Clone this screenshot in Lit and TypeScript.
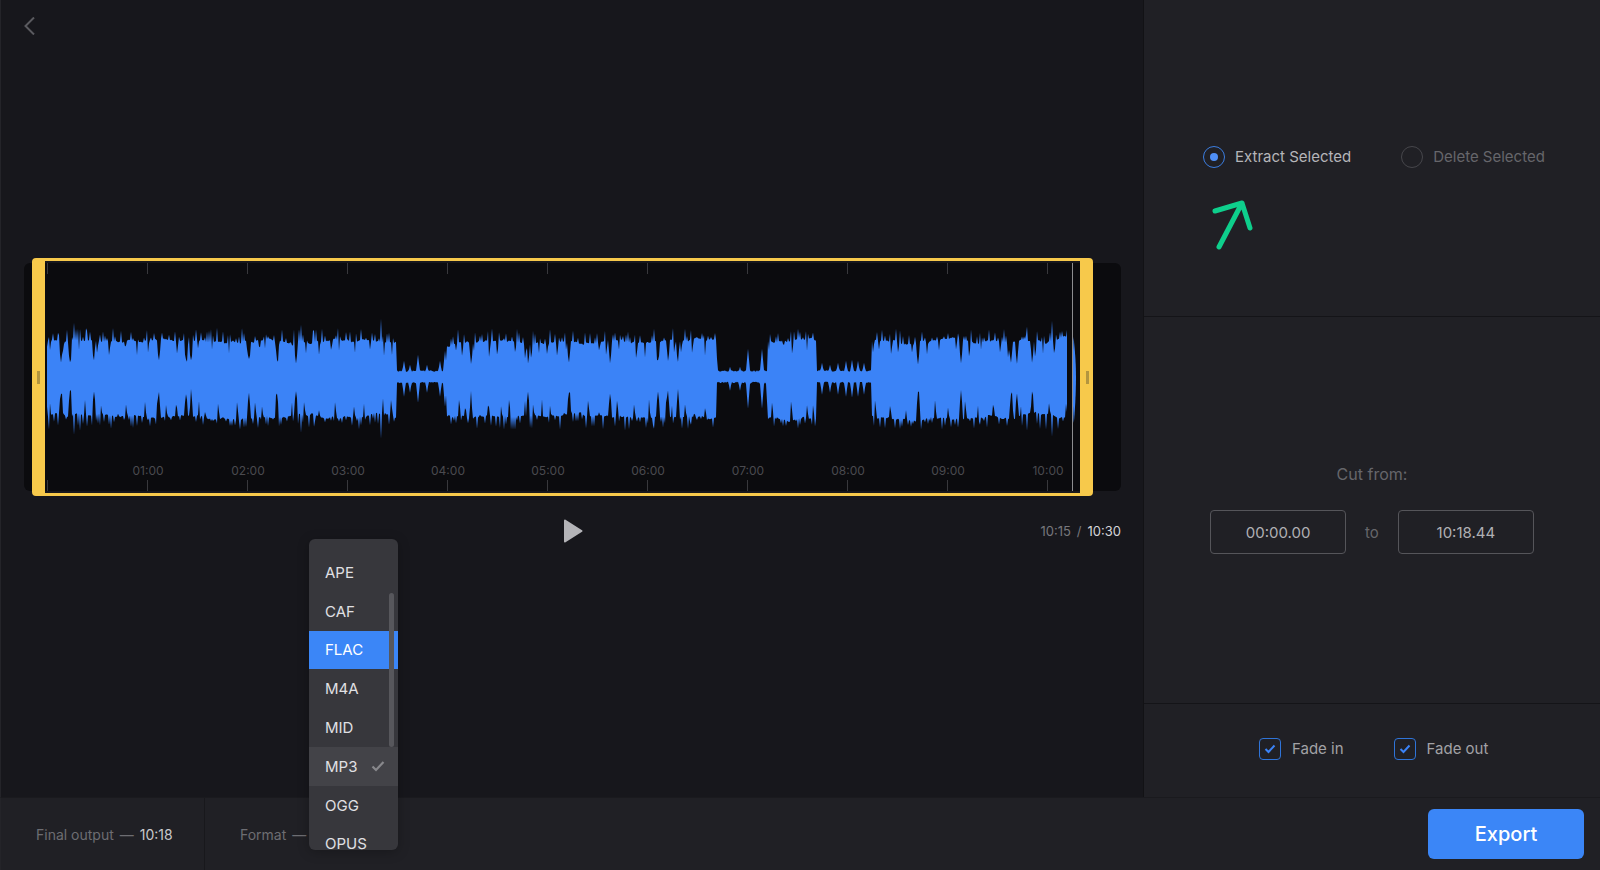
import { LitElement, html, css } from "lit";
import { customElement } from "lit/decorators.js";

// seeded noise so the waveform comes out the same every time
function rng(seed: number) {
  return () => {
    seed = (seed + 0x6d2b79f5) | 0;
    let t = Math.imul(seed ^ (seed >>> 15), 1 | seed);
    t = (t + Math.imul(t ^ (t >>> 7), 61 | t)) ^ t;
    return ((t ^ (t >>> 14)) >>> 0) / 4294967296;
  };
}

// [from, to] in page px
const QUIET = [
  [397, 447],
  [717, 768],
  [817, 872],
];
const NOTCHES = [
  61, 70, 94, 159, 186, 191, 249, 277, 296, 471, 528, 569, 610, 658, 668, 678, 918, 961, 1011, 1017, 1032,
];
const PEAKS: [number, number][] = [
  [48, 36], [58, 44], [74, 54], [80, 50], [87, 46], [301, 52], [314, 46], [375, 42], [381, 58], [389, 44],
  [625, 50], [654, 48], [691, 44], [980, 44], [1027, 50], [1052, 56],
];
const QUIET_PEAKS: [number, number][] = [
  [404, 16], [410, 12], [418, 22], [427, 12], [440, 16], [445, 26], [730, 10], [740, 10], [748, 28], [762, 28],
  [822, 14], [830, 12], [838, 14], [846, 16], [852, 17], [858, 16], [864, 14],
];

function channel(seed: number, bias: number) {
  const r = rng(seed);
  const out: number[] = [];
  for (let x = 47; x <= 1067; x++) out.push(0);
  const add = (cx: number, h: number, w: number) => {
    for (let i = -Math.ceil(w); i <= Math.ceil(w); i++) {
      const k = cx + i - 47;
      if (k < 0 || k >= out.length) continue;
      out[k] = Math.max(out[k], h * (1 - Math.abs(i) / (w + 0.6)));
    }
  };
  const quiet = (x: number) => QUIET.some(([a, b]) => x >= a && x < b);
  // floor
  let drift = 0;
  out.forEach((_, k) => {
    const x = k + 47;
    drift += (r() - 0.5) * 2.2;
    drift *= 0.94;
    out[k] = quiet(x) ? 5 + r() * 1.5 : 36 + bias + drift;
  });
  // hair spikes
  for (let x = 47; x <= 1067; x += 2 + Math.floor(r() * 5)) {
    if (quiet(x)) continue;
    add(x, 38 + bias + r() * 11, 1 + r() * 2);
  }
  PEAKS.forEach(([x, h]) => add(x, h + bias, 1.6));
  QUIET_PEAKS.forEach(([x, h]) => add(x, h + bias, 2));
  // small random dips
  for (let x = 50; x < 1067; x += 6 + Math.floor(r() * 14)) {
    if (quiet(x)) continue;
    const k = x - 47;
    const d = 0.55 + r() * 0.25;
    out[k] *= d;
    if (out[k + 1]) out[k + 1] *= d + 0.2;
  }
  // deep notches
  NOTCHES.forEach((x) => {
    const k = x - 47;
    out[k] = 12 + r() * 6;
    if (out[k - 1]) out[k - 1] *= 0.6;
    if (out[k + 1]) out[k + 1] *= 0.6;
  });
  out[0] = 30;
  return out;
}

function wavePath() {
  const top = channel(11, 0);
  const bottom = channel(29, 4);
  const cy = 113.7;
  let d = `M23 ${cy}`;
  top.forEach((a, k) => (d += `L${k + 23} ${(cy - a).toFixed(1)}`));
  for (let k = bottom.length - 1; k >= 0; k--) d += `L${k + 23} ${(cy + bottom[k]).toFixed(1)}`;
  d += "Z";
  return d;
}

// the small blob right under the playhead
const BLOB = "M1048.6 113.7C1048.6 90 1049.6 74 1049.6 74C1051 88 1052 100 1052 113.7C1052 128 1051 148 1049.8 160C1049 148 1048.6 128 1048.6 113.7Z";

const LABELS = ["", "01:00", "02:00", "03:00", "04:00", "05:00", "06:00", "07:00", "08:00", "09:00", "10:00"];
const FORMATS = ["APE", "CAF", "FLAC", "M4A", "MID", "MP3", "OGG", "OPUS"];

@customElement("app-root")
export class AppRoot extends LitElement {
  static styles = css`
    :host {
      display: block;
      height: 870px;
      font-family: "Inter", "Liberation Sans", sans-serif;
    }
    .app {
      position: relative;
      height: 870px;
      overflow: hidden;
      display: grid;
      grid-template-columns: 1144px 456px;
      grid-template-rows: 797px 73px;
      background: #17171c;
    }
    .main {
      border-left: 1px solid #242429;
      border-right: 1px solid #121215;
      padding: 17px 22px 0 23px;
      display: flex;
      flex-direction: column;
      align-items: flex-start;
    }
    .back {
      display: block;
      margin-bottom: 228px;
    }
    .track {
      position: relative;
      width: 1097px;
      height: 228px;
      border-radius: 6px;
      background: #0b0b0e;
      display: flex;
      flex-direction: column;
      justify-content: space-between;
    }
    .ruler {
      display: flex;
      padding-left: 23px;
    }
    .mark {
      position: relative;
      width: 100px;
      height: 11px;
      flex: none;
      border-left: 1px solid #38383c;
      box-sizing: border-box;
    }
    .mark span {
      position: absolute;
      left: -30px;
      width: 60px;
      bottom: 13px;
      text-align: center;
      font-size: 12px;
      line-height: 14px;
      color: #4a4a4f;
    }
    .wave {
      position: absolute;
      left: 0;
      top: 0;
    }
    .frame {
      position: absolute;
      left: 8px;
      top: -5px;
      width: 1061px;
      height: 238px;
      box-sizing: border-box;
      border: solid #f7c94b;
      border-width: 3px 13px;
      border-radius: 4px;
    }
    .grip {
      position: absolute;
      top: 110px;
      width: 3px;
      height: 13px;
      background: #b3953f;
    }
    .grip.l {
      left: -8px;
    }
    .grip.r {
      right: -9px;
    }
    .playhead {
      position: absolute;
      left: 1048px;
      top: 0;
      width: 1px;
      height: 228px;
      background: #8d8d8f;
    }
    .transport {
      width: 1097px;
      margin-top: 27px;
      height: 26px;
      display: grid;
      grid-template-columns: 1fr auto 1fr;
      align-items: center;
    }
    .play {
      grid-column: 2;
      display: block;
    }
    .time {
      grid-column: 3;
      justify-self: end;
      font-size: 13px;
      color: #77777c;
      display: flex;
      gap: 6px;
    }
    .time b {
      font-weight: 400;
      color: #d4d4d8;
    }
    .side {
      background: #202025;
      display: grid;
      grid-template-rows: 317px 387px 92px;
    }
    .side > section {
      display: flex;
      box-sizing: border-box;
      border-bottom: 1px solid #141418;
    }
    .side > section:last-child {
      border-bottom: 0;
    }
    .modes {
      position: relative;
      padding: 146px 0 0 59px;
      gap: 50px;
      align-items: flex-start;
    }
    .radio {
      display: flex;
      align-items: center;
      gap: 10px;
      font-size: 15px;
      line-height: 22px;
      color: #b5b5b9;
    }
    .radio i {
      width: 22px;
      height: 22px;
      box-sizing: border-box;
      border: 1.5px solid #3b7de0;
      border-radius: 50%;
      display: grid;
      place-items: center;
    }
    .radio i::after {
      content: "";
      width: 8px;
      height: 8px;
      border-radius: 50%;
      background: #4f8ff7;
    }
    .radio.off {
      color: #66666b;
    }
    .radio.off i {
      border-color: #46464b;
    }
    .radio.off i::after {
      display: none;
    }
    .arrow {
      position: absolute;
      left: 68px;
      top: 196px;
    }
    .cut {
      flex-direction: column;
      align-items: center;
      padding-top: 147px;
    }
    .cut h4 {
      margin: 0 0 26px;
      font-size: 16px;
      font-weight: 400;
      line-height: 20px;
      color: #66666b;
    }
    .range {
      display: flex;
      align-items: center;
      gap: 19px;
      font-size: 15px;
      color: #66666b;
    }
    .box {
      width: 136px;
      height: 44px;
      box-sizing: border-box;
      border: 1px solid #55555a;
      border-radius: 4px;
      display: grid;
      place-items: center;
      color: #b0b0b4;
    }
    .fades {
      padding: 34px 0 0 115px;
      gap: 50px;
      align-items: flex-start;
    }
    .check {
      display: flex;
      align-items: center;
      gap: 11px;
      font-size: 15px;
      line-height: 22px;
      color: #a2a2a6;
    }
    .check i {
      width: 22px;
      height: 22px;
      box-sizing: border-box;
      border: 1.5px solid #2f74d8;
      border-radius: 4px;
      display: grid;
      place-items: center;
    }
    .bar {
      grid-column: 1 / 3;
      background: #202025;
      border-top: 1px solid #1a1a1e;
      border-left: 1px solid #242429;
      display: flex;
      align-items: center;
      font-size: 14px;
      color: #6d6d72;
    }
    .cell {
      height: 100%;
      display: flex;
      align-items: center;
      gap: 6px;
      box-sizing: border-box;
      padding-left: 35px;
    }
    .cell:first-child {
      width: 204px;
      border-right: 1px solid #18181c;
    }
    .cell b {
      font-weight: 400;
      color: #c8c8cc;
    }
    .export {
      margin-left: auto;
      margin-right: 16px;
      width: 156px;
      height: 50px;
      border: 0;
      border-radius: 6px;
      background: #3b86f7;
      color: #fff;
      font: 500 20px "Inter", "Liberation Sans", sans-serif;
    }
    .menu {
      position: absolute;
      left: 309px;
      top: 539px;
      width: 89px;
      height: 311px;
      box-sizing: border-box;
      padding-top: 14px;
      overflow: hidden;
      background: #37373c;
      border-radius: 6px;
      box-shadow: 0 2px 12px rgba(0, 0, 0, 0.25);
    }
    .menu div {
      position: relative;
      height: 38.8px;
      box-sizing: border-box;
      padding-left: 16px;
      display: flex;
      align-items: center;
      font-size: 15px;
      color: #e0e0e4;
    }
    .menu .hover {
      background: #434348;
    }
    .menu .active {
      background: #3b86f7;
      color: #fff;
    }
    .menu svg {
      position: absolute;
      left: 62px;
      top: 13px;
    }
    .scroll {
      position: absolute;
      left: 80px;
      top: 54px;
      width: 5px;
      height: 154px;
      border-radius: 3px;
      background: #57575c;
    }
  `;

  private wave = wavePath();

  render() {
    return html`
      <div class="app">
        <div class="main">
          <svg class="back" width="12" height="18" viewBox="0 0 12 18" fill="none">
            <path d="M10 0.5L1.5 9L10 17.5" stroke="#5a5a5f" stroke-width="2" />
          </svg>
          <div class="track">
            <div class="ruler">${LABELS.map(() => html`<div class="mark"></div>`)}</div>
            <svg class="wave" width="1097" height="228" viewBox="0 0 1097 228">
              <path d=${this.wave} fill="#3b83f7" />
              <path d=${BLOB} fill="#3b83f7" />
            </svg>
            <div class="ruler">
              ${LABELS.map((l) => html`<div class="mark">${l ? html`<span>${l}</span>` : ""}</div>`)}
            </div>
            <div class="playhead"></div>
            <div class="frame">
              <div class="grip l"></div>
              <div class="grip r"></div>
            </div>
          </div>
          <div class="transport">
            <svg class="play" width="20" height="24" viewBox="0 0 20 24">
              <path d="M2 1.5L18.5 12L2 22.5Z" fill="#b4b4b8" stroke="#b4b4b8" stroke-width="2" stroke-linejoin="round" />
            </svg>
            <div class="time"><span>10:15</span><span>/</span><b>10:30</b></div>
          </div>
        </div>

        <div class="side">
          <section class="modes">
            <label class="radio"><i></i>Extract Selected</label>
            <label class="radio off"><i></i>Delete Selected</label>
            <svg class="arrow" width="44" height="56" viewBox="0 0 44 56" fill="none">
              <path d="M7 51L30 7M3 15L30 7L38 32" stroke="#0ecf8c" stroke-width="5" stroke-linecap="round" stroke-linejoin="round" />
            </svg>
          </section>
          <section class="cut">
            <h4>Cut from:</h4>
            <div class="range">
              <div class="box">00:00.00</div>
              <span>to</span>
              <div class="box">10:18.44</div>
            </div>
          </section>
          <section class="fades">
            <label class="check"><i>${this.tick()}</i>Fade in</label>
            <label class="check"><i>${this.tick()}</i>Fade out</label>
          </section>
        </div>

        <div class="bar">
          <div class="cell">Final output <span>—</span> <b>10:18</b></div>
          <div class="cell">Format <span>—</span></div>
          <button class="export">Export</button>
        </div>

        <div class="menu">
          ${FORMATS.map(
            (f) => html`<div class=${f === "FLAC" ? "active" : f === "MP3" ? "hover" : ""}>
              ${f}
              ${f === "MP3"
                ? html`<svg width="14" height="12" viewBox="0 0 14 12" fill="none">
                    <path d="M1.5 6.5L5 10L12.5 2" stroke="#88888c" stroke-width="2.2" />
                  </svg>`
                : ""}
            </div>`
          )}
          <span class="scroll"></span>
        </div>
      </div>
    `;
  }

  private tick() {
    return html`<svg width="12" height="10" viewBox="0 0 12 10" fill="none">
      <path d="M1.5 5L4.5 8L10.5 1.5" stroke="#3b83f7" stroke-width="2" />
    </svg>`;
  }
}
